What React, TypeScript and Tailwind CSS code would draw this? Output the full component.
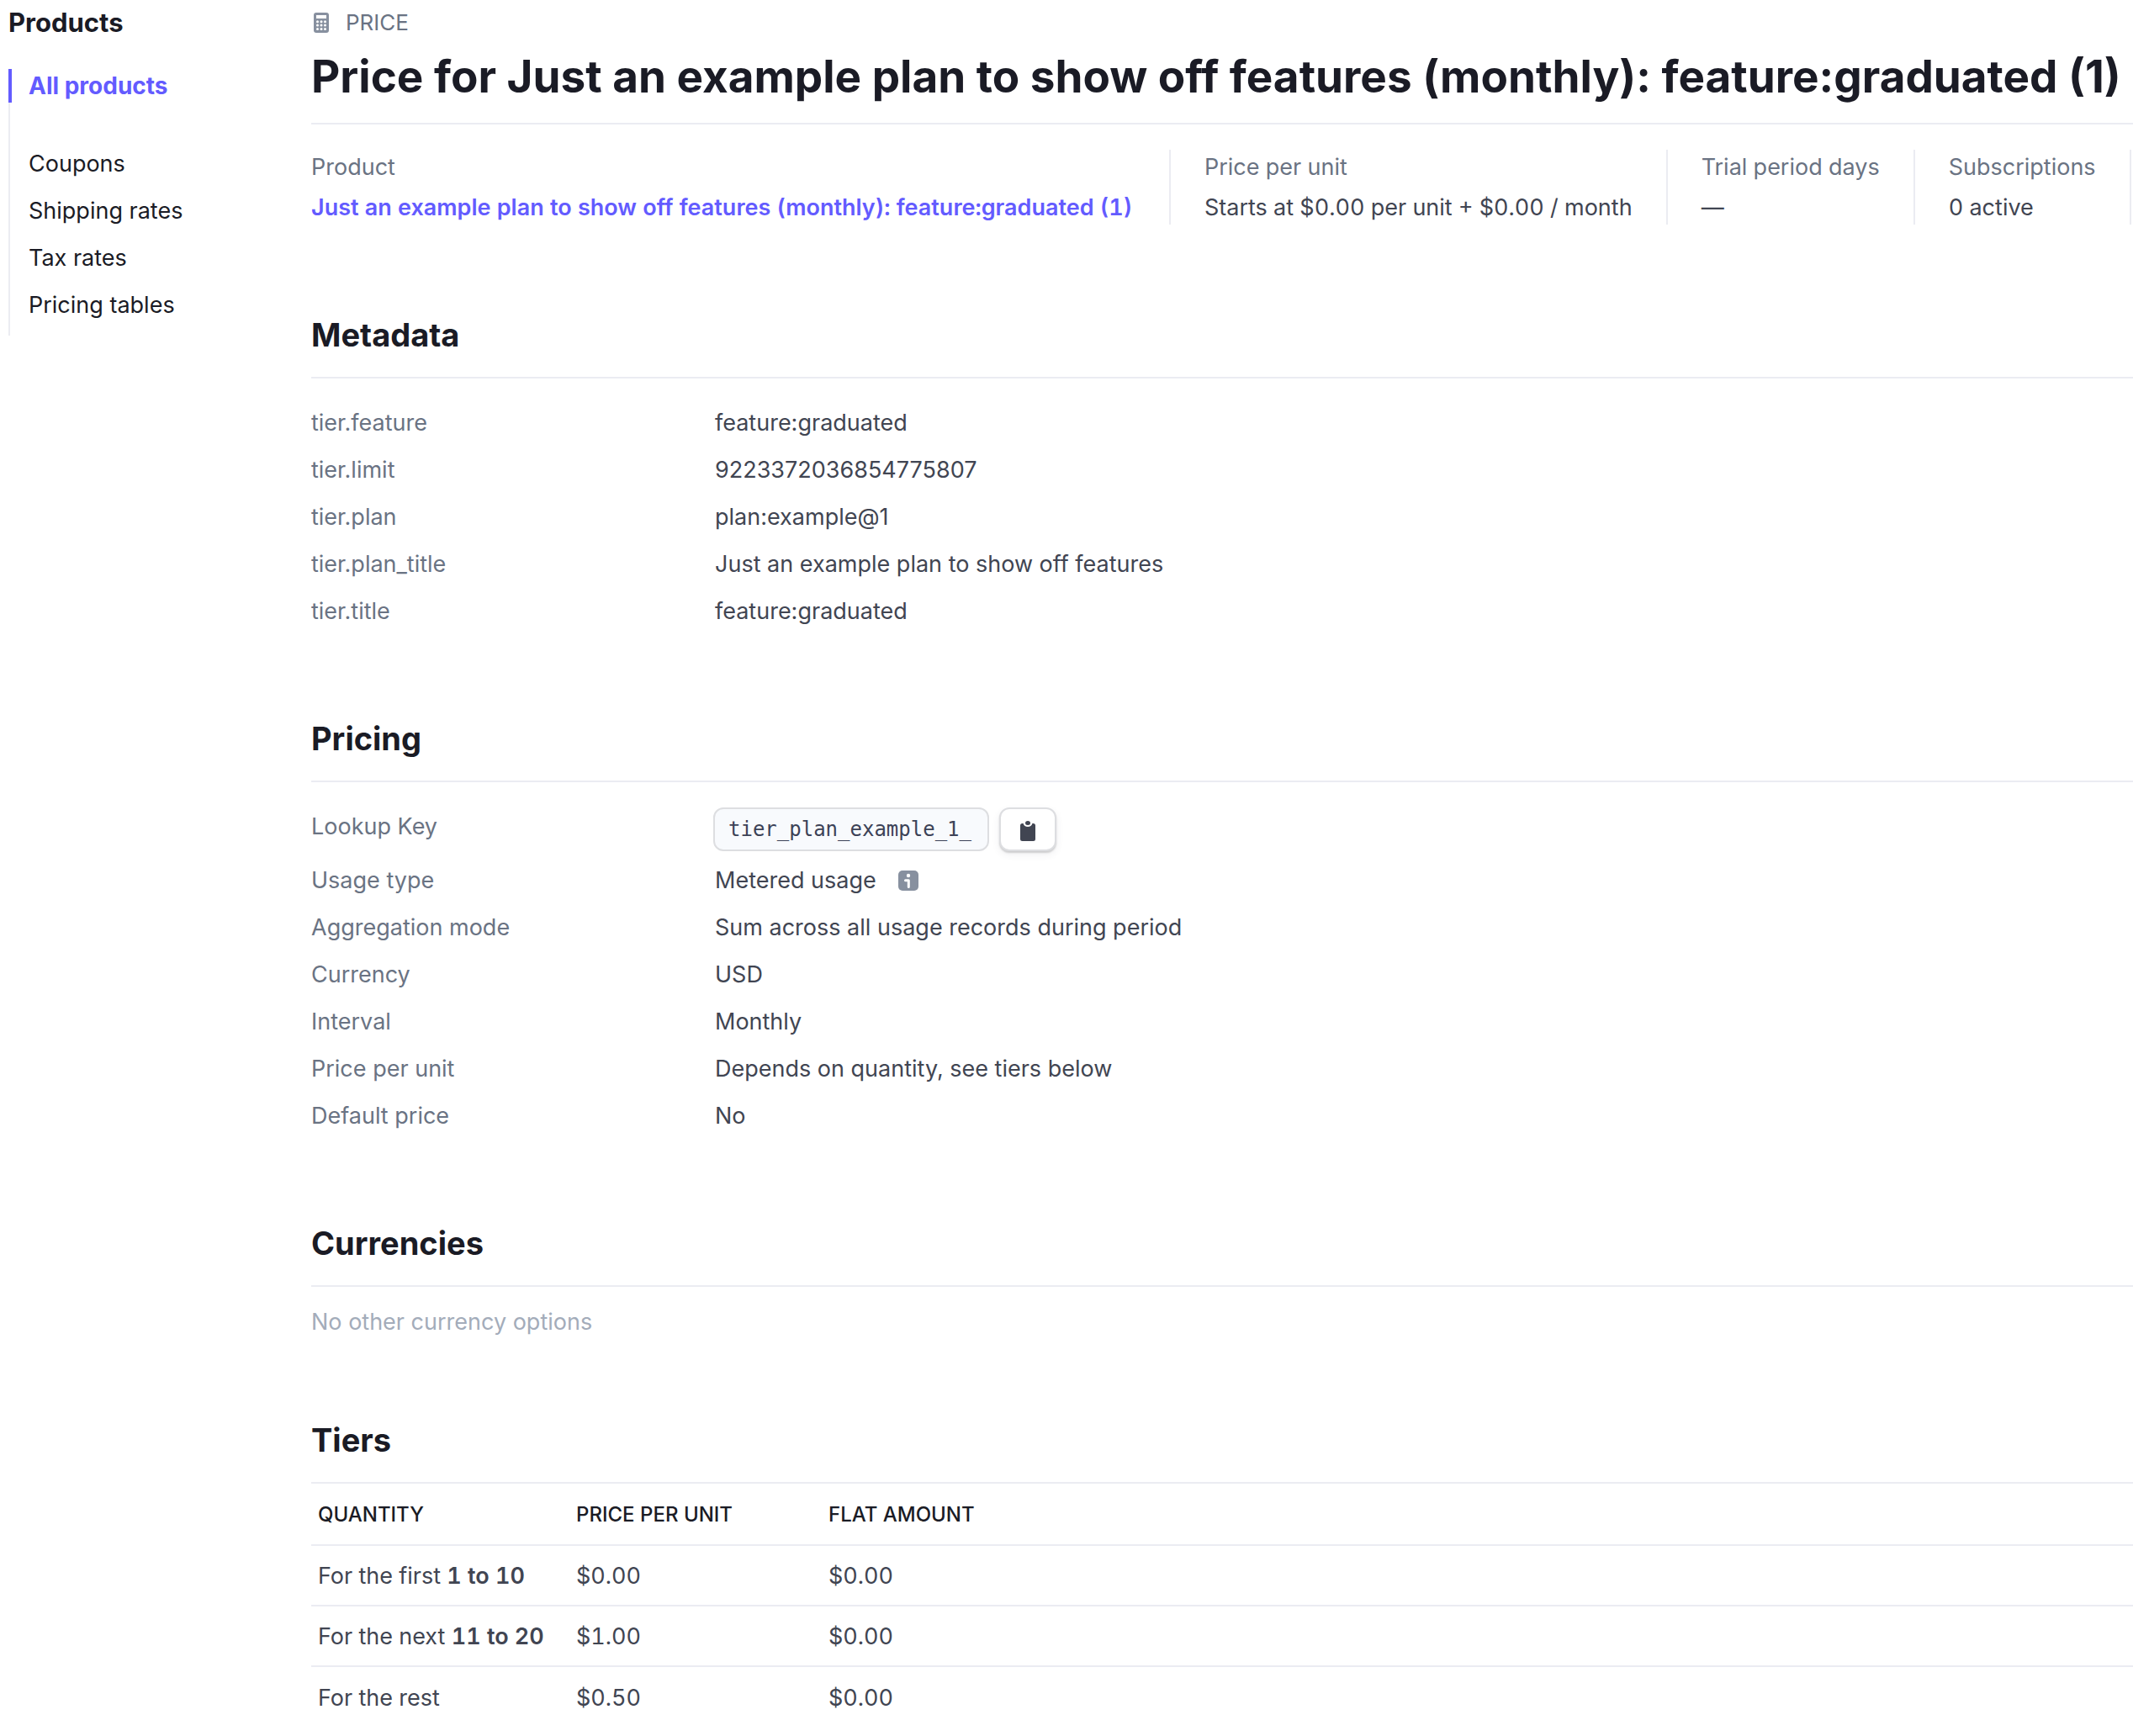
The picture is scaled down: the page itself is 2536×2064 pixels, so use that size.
import type { ReactNode } from 'react';

const navLinks = ['Coupons', 'Shipping rates', 'Tax rates', 'Pricing tables'];

const metadata = [
  ['tier.feature', 'feature:graduated'],
  ['tier.limit', '9223372036854775807'],
  ['tier.plan', 'plan:example@1'],
  ['tier.plan_title', 'Just an example plan to show off features'],
  ['tier.title', 'feature:graduated'],
];

const tiers = [
  { label: 'For the first ', range: '1 to 10', unit: '$0.00', flat: '$0.00' },
  { label: 'For the next ', range: '11 to 20', unit: '$1.00', flat: '$0.00' },
  { label: 'For the rest', range: '', unit: '$0.50', flat: '$0.00' },
];

function CalculatorIcon() {
  return (
    <svg viewBox="0 0 18 24" className="h-6 w-[18px]" aria-hidden="true">
      <rect width="18" height="24" rx="3" fill="#87909f" />
      <rect x="3" y="3" width="12" height="4" fill="#fff" />
      {[10.7, 15, 19.5].map((y) =>
        [4.5, 9, 13.5].map((x) => <circle key={`${x}-${y}`} cx={x} cy={y} r="1.5" fill="#fff" />),
      )}
    </svg>
  );
}

function ClipboardIcon() {
  return (
    <svg viewBox="0 0 18 24" className="h-6 w-[18px]" aria-hidden="true">
      <path
        d="M2.5 3H3.6C4.2 5.4 6.3 7 9 7s4.800-1.600 5.400-4H15.500A2.500 2.500 0 0 1 18 5.500V21.500A2.500 2.500 0 0 1 15.500 24H2.500A2.500 2.500 0 0 1 0 21.500V5.500A2.500 2.500 0 0 1 2.500 3Z"
        fill="#414552"
      />
      <ellipse cx="9" cy="2.500" rx="3" ry="2.500" fill="#414552" />
    </svg>
  );
}

function InfoIcon() {
  return (
    <svg viewBox="0 0 24 24" className="size-6" aria-hidden="true">
      <rect width="24" height="24" rx="5" fill="#87909f" />
      <circle cx="12" cy="6" r="2.200" fill="#fff" />
      <path d="M8.500 11.800H12.300V19.500" fill="none" stroke="#fff" strokeWidth="3" strokeLinecap="round" strokeLinejoin="round" />
    </svg>
  );
}

function Section({ title, children }: { title: string; children: ReactNode }) {
  return (
    <section className="pb-[100px]">
      <h2 className="border-b-2 border-[#ebecf2] pb-[26px] text-[38px] leading-[48px] font-bold text-[#1a1b25]">
        {title}
      </h2>
      {children}
    </section>
  );
}

function Row({ label, children }: { label: string; children: ReactNode }) {
  return (
    <div className="flex pt-[9px] pb-[7px]">
      <dt className="w-[480px] shrink-0 text-[#6a7383]">{label}</dt>
      <dd className="flex items-center">{children}</dd>
    </div>
  );
}

function Stat({ label, children }: { label: string; children: ReactNode }) {
  return (
    <div className="mr-10 border-r-2 border-[#ebecf2] pt-px pr-10 whitespace-nowrap first:min-w-[1022px]">
      <dt className="text-[#6a7383]">{label}</dt>
      <dd className="mt-2">{children}</dd>
    </div>
  );
}

export default function App() {
  return (
    <div className="flex h-screen overflow-hidden bg-white font-['Inter','Liberation_Sans',sans-serif] text-[27px] leading-10 text-[#414552]">
      <nav aria-label="Products" className="w-[370px] shrink-0 pt-[7px] pl-2.5 text-[#1a1b25]">
        <h2 className="text-[31px] leading-10 font-bold">Products</h2>
        <div className="mt-[35px] flex flex-col items-start border-l-2 border-[#ebecf2] pb-2">
          <a href="#all" className="-ml-0.5 border-l-4 border-[#635bff] pl-5 text-[28px] font-bold text-[#635bff]">
            All products
          </a>
          <ul className="mt-[45px] pl-[22px]">
            {navLinks.map((name) => (
              <li key={name} className="py-2">
                <a href="#nav">{name}</a>
              </li>
            ))}
          </ul>
        </div>
      </nav>

      <main className="min-w-0 flex-1">
        <div className="flex h-[54px] items-center gap-5 pl-[3px] text-[26px] text-[#6a7383]">
          <CalculatorIcon />
          PRICE
        </div>
        <h1 className="border-b-2 border-[#ebecf2] pt-1 pb-[22px] text-[53px] leading-[66px] font-bold whitespace-nowrap text-[#1a1b25]">
          Price for Just an example plan to show off features (monthly): feature:graduated (1)
        </h1>
        <dl className="mt-[30px] mb-[107px] flex tabular-nums">
          <Stat label="Product">
            <a href="#product" className="font-semibold text-[#635bff]">
              Just an example plan to show off features (monthly): feature:graduated (1)
            </a>
          </Stat>
          <Stat label="Price per unit">Starts at $0.00 per unit + $0.00 / month</Stat>
          <Stat label="Trial period days">—</Stat>
          <Stat label="Subscriptions">0 active</Stat>
        </dl>

        <Section title="Metadata">
          <dl className="pt-6">
            {metadata.map(([key, value]) => (
              <Row key={key} label={key}>
                {value}
              </Row>
            ))}
          </dl>
        </Section>

        <Section title="Pricing">
          <dl className="pt-6">
            <div className="flex py-1.5">
              <dt className="w-[478px] shrink-0 pt-[3px] text-[#6a7383]">Lookup Key</dt>
              <dd className="flex gap-3">
                <code className="h-[52px] w-[328px] rounded-xl border-2 border-[#dddee1] bg-[#f8fafd] px-4 font-['DejaVu_Sans_Mono',monospace] text-[24px] leading-[48px] text-[#3c4257]">
                  tier_plan_example_1_
                </code>
                <button
                  type="button"
                  aria-label="Copy lookup key"
                  className="flex h-[52px] w-[68px] items-center justify-center rounded-xl border-2 border-[#dddee1] bg-white pt-1 shadow-[0_2px_2px_rgba(0,0,0,0.16),0_4px_10px_rgba(60,66,87,0.08)]"
                >
                  <ClipboardIcon />
                </button>
              </dd>
            </div>
            <Row label="Usage type">
              <span className="mr-[26px]">Metered usage</span>
              <InfoIcon />
            </Row>
            <Row label="Aggregation mode">Sum across all usage records during period</Row>
            <Row label="Currency">USD</Row>
            <Row label="Interval">Monthly</Row>
            <Row label="Price per unit">Depends on quantity, see tiers below</Row>
            <Row label="Default price">No</Row>
          </dl>
        </Section>

        <Section title="Currencies">
          <p className="pt-[26px] leading-8 text-[#a3acba]">No other currency options</p>
        </Section>

        <Section title="Tiers">
          <table className="w-full table-fixed text-left tabular-nums">
            <colgroup>
              <col className="w-[307px]" />
              <col className="w-[300px]" />
              <col />
            </colgroup>
            <thead>
              <tr className="h-[73px] border-b-2 border-[#ebecf2] text-[24px] text-[#1a1b25]">
                <th className="pt-0.5 pl-2 font-medium">QUANTITY</th>
                <th className="pt-0.5 pl-2 font-medium">PRICE PER UNIT</th>
                <th className="pt-0.5 pl-2 font-medium">FLAT AMOUNT</th>
              </tr>
            </thead>
            <tbody>
              {tiers.map((tier) => (
                <tr key={tier.label} className="h-[72px] border-b-2 border-[#ebecf2] whitespace-nowrap last:border-b-0">
                  <td className="pt-0.5 pl-2">
                    {tier.label}
                    <strong className="font-semibold">{tier.range}</strong>
                  </td>
                  <td className="pt-0.5 pl-2">{tier.unit}</td>
                  <td className="pt-0.5 pl-2">{tier.flat}</td>
                </tr>
              ))}
            </tbody>
          </table>
        </Section>
      </main>
    </div>
  );
}
